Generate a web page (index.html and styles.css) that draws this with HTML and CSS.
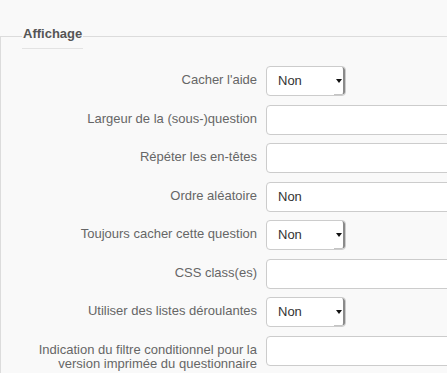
FILE: index.html
```html
<!DOCTYPE html>
<html lang="fr">
<head>
    <meta charset="UTF-8">
    <meta name="viewport" content="width=device-width, initial-scale=1.0">
    <title>Affichage</title>
    <link rel="stylesheet" href="styles.css">
</head>
<body>
    <fieldset class="settings">
        <legend>Affichage</legend>

        <div class="form-row">
            <label class="control-label">Cacher l'aide</label>
            <div class="select-box"><span>Non</span><span class="caret"></span></div>
        </div>

        <div class="form-row">
            <label class="control-label">Largeur de la (sous-)question</label>
            <div class="text-input"></div>
        </div>

        <div class="form-row">
            <label class="control-label">Répéter les en-têtes</label>
            <div class="text-input"></div>
        </div>

        <div class="form-row">
            <label class="control-label">Ordre aléatoire</label>
            <div class="text-input">Non</div>
        </div>

        <div class="form-row">
            <label class="control-label">Toujours cacher cette question</label>
            <div class="select-box"><span>Non</span><span class="caret"></span></div>
        </div>

        <div class="form-row">
            <label class="control-label">CSS class(es)</label>
            <div class="text-input"></div>
        </div>

        <div class="form-row">
            <label class="control-label">Utiliser des listes déroulantes</label>
            <div class="select-box"><span>Non</span><span class="caret"></span></div>
        </div>

        <div class="form-row">
            <label class="control-label">Indication du filtre conditionnel pour la version imprimée du questionnaire (ss)</label>
            <div class="text-input"></div>
        </div>
    </fieldset>
</body>
</html>
```

FILE: styles.css
```css
html, body {
    overflow: hidden;
}
body {
    margin: 0;
    padding: 0;
    background-color: #f9f9f9;
    font-family: 'Liberation Sans', Arial, sans-serif;
    font-size: 13px;
    color: #333;
}
.settings {
    margin: 23px 0 0 0;
    padding: 17px 0 0 21px;
    border: 1px solid #dcdcdc;
    border-right: none;
    width: 600px;
    min-width: 0;
}
.settings legend {
    padding: 2px 1px 5px;
    line-height: 18px;
    font-weight: bold;
    font-size: 13px;
    color: #555;
    border-bottom: 1px solid #e3e3e3;
}
.form-row {
    display: flex;
    align-items: flex-start;
    gap: 9px;
    margin-bottom: 8.5px;
}
.control-label {
    flex: 0 0 235px;
    box-sizing: border-box;
    padding: 7px 0 0 14px;
    line-height: 14px;
    text-align: right;
    color: #666;
}
.text-input,
.select-box {
    box-sizing: border-box;
    height: 30px;
    background-color: #fff;
    border: 1px solid #ccc;
    border-radius: 4px;
    line-height: 28px;
    padding-left: 11px;
    color: #333;
}
.text-input {
    width: 260px;
}
.select-box {
    width: 80px;
    display: flex;
    justify-content: space-between;
    padding-right: 0;
    overflow: hidden;
}
.caret {
    position: relative;
    width: 11px;
    height: 28px;
    border-right: 2px solid #8a8a8a;
    border-bottom: 1px solid #c4c4c4;
    box-sizing: border-box;
    border-radius: 0 3px 3px 0;
}
.caret::after {
    content: "";
    position: absolute;
    left: 2px;
    top: 12px;
    border-left: 3px solid transparent;
    border-right: 3px solid transparent;
    border-top: 4px solid #111;
}
```
